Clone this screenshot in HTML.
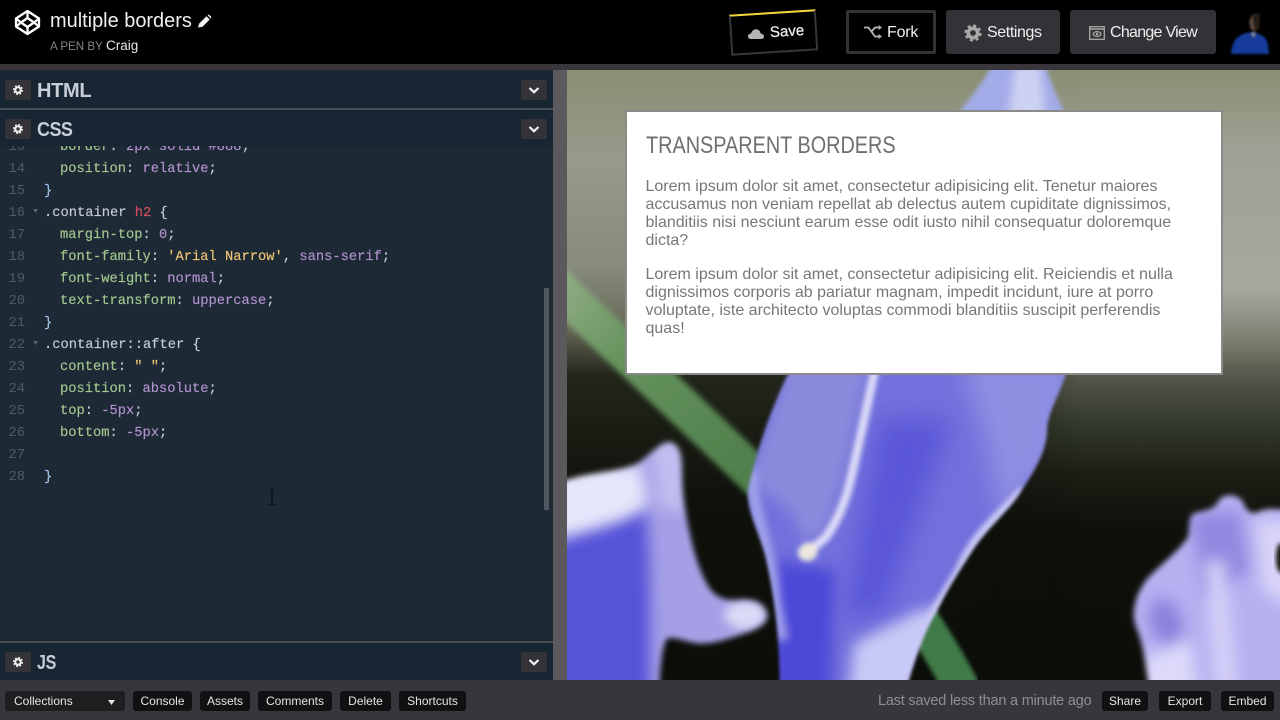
<!DOCTYPE html>
<html><head><meta charset="utf-8"><title>multiple borders</title>
<style>
*{box-sizing:border-box;margin:0;padding:0}
html,body{width:1280px;height:720px;overflow:hidden;background:#000;font-family:"Liberation Sans",sans-serif}
.a{position:absolute;white-space:nowrap}
.btn{position:absolute;background:#333236;border-radius:3px}
.hd{position:absolute;left:0;width:553px;background:#182634}
.sq{position:absolute;width:26px;height:20px;background:#343338;border-radius:2px}
.ttl{position:absolute;left:37px;font-weight:bold;font-size:20px;color:#c8ced6;line-height:20px;transform-origin:0 0}
.l{position:absolute;left:0;height:22px;line-height:22px;font-family:"Liberation Mono",monospace;font-size:13.75px;white-space:pre;color:#c5ccd2;-webkit-text-stroke:.15px}
.n{position:absolute;left:0;width:25px;text-align:right;color:#4e5a64;font-family:"Liberation Mono",monospace;font-size:13.75px;height:22px;line-height:22px}
.p{color:#a3c88f}.v{color:#b392cf}.r{color:#d24c5e}.s{color:#f0c674}.b{color:#a5c8f0}
.bb{position:absolute;top:691px;height:20px;background:#111013;border-radius:3px;color:#e4e4e4;font-size:12px;line-height:20px;text-align:center}
.card{position:absolute;left:625px;top:110px;width:598px;height:265px;background:#fff;border:2px solid #8a8a88}
.card p{position:absolute;left:18.5px;font-size:16px;line-height:18px;color:#777;white-space:nowrap}
</style></head><body>
<svg width="0" height="0" style="position:absolute"><defs>
<g id="gear"><circle cx="0" cy="0" r="2.7" fill="none" stroke="currentColor" stroke-width="2"/><circle cx="0" cy="0" r="4.300" fill="none" stroke="currentColor" stroke-width="1.400" stroke-dasharray="1.900 1.480"/></g>
<path id="chev" d="M-4.500-2L0 2.200 4.500-2" fill="none" stroke="#f2f2f2" stroke-width="2.200"/>
</defs></svg>

<!-- preview -->
<svg class="a" style="left:567px;top:70px" width="713" height="610" viewBox="567 70 713 610">
<defs>
<linearGradient id="bg" x1="0" y1="0" x2="0" y2="1">
<stop offset="0" stop-color="#8a8e72"/><stop offset=".13" stop-color="#9ea295"/><stop offset=".36" stop-color="#a5a99d"/><stop offset=".44" stop-color="#7d8172"/><stop offset=".5" stop-color="#55584a"/><stop offset=".58" stop-color="#343a2c"/><stop offset=".66" stop-color="#1d1f16"/><stop offset=".75" stop-color="#0e100a"/><stop offset="1" stop-color="#0b0d08"/>
</linearGradient>
<linearGradient id="bgl" x1="0" y1="0" x2="0" y2="1">
<stop offset="0" stop-color="#8a8e72"/><stop offset=".15" stop-color="#969b8c"/><stop offset=".32" stop-color="#878b7c"/><stop offset=".42" stop-color="#6a6b5a"/><stop offset=".5" stop-color="#22261a"/><stop offset=".7" stop-color="#0f110b"/><stop offset="1" stop-color="#0b0d08"/>
</linearGradient>
<linearGradient id="blend" x1="0" x2="1" y1="0" y2="0"><stop offset="0" stop-color="#fff"/><stop offset=".55" stop-color="#fff"/><stop offset=".72" stop-color="#000"/></linearGradient>
<linearGradient id="stemg" gradientUnits="userSpaceOnUse" x1="560" y1="290" x2="750" y2="470"><stop offset="0" stop-color="#8dab82"/><stop offset=".35" stop-color="#66935d"/><stop offset="1" stop-color="#4f7f4c"/></linearGradient>
<mask id="leftm"><rect x="567" y="70" width="713" height="610" fill="url(#blend)"/></mask>
<filter id="b1" x="-10%" y="-10%" width="120%" height="120%"><feGaussianBlur stdDeviation="1.500"/></filter>
<filter id="b2" x="-20%" y="-20%" width="140%" height="140%"><feGaussianBlur stdDeviation="2"/></filter>
<filter id="b3" x="-10%" y="-10%" width="120%" height="120%"><feGaussianBlur stdDeviation="3"/></filter>
<filter id="b4" x="-30%" y="-30%" width="160%" height="160%"><feGaussianBlur stdDeviation="4"/></filter>
<filter id="b7" x="-40%" y="-40%" width="180%" height="180%"><feGaussianBlur stdDeviation="7"/></filter>
<filter id="b12" x="-50%" y="-50%" width="200%" height="200%"><feGaussianBlur stdDeviation="12"/></filter>
<clipPath id="cp"><path d="M790 370C770 410 757 450 748 490C746 510 758 530 765 555C773 590 780 630 780 700H902L909 680C918 650 928 625 936 613C950 585 960 570 973 550C990 525 1010 510 1022 490C1035 470 1047 450 1047 430C1048 410 1060 395 1067 370Z"/></clipPath>
<clipPath id="cl"><path d="M540 490L567 480C590 472 620 472 638 463C650 455 660 442 670 442C680 445 682 455 682 470C682 490 684 505 688 525C692 545 697 565 705 580C712 595 720 600 735 600C750 598 762 600 767 612C770 625 755 630 740 635C725 640 710 645 695 643C680 640 670 635 666 640C662 650 660 665 659 700H540Z"/></clipPath>
<clipPath id="cr"><path d="M1134 610C1136 595 1140 590 1146 580C1160 565 1178 552 1188 537C1190 525 1188 515 1195 513C1205 510 1215 510 1219 500C1225 493 1238 494 1243 502C1246 510 1250 515 1258 512C1266 508 1275 508 1300 512V700H1151L1148 680C1145 660 1143 645 1138 632C1135 625 1133 618 1134 610Z"/></clipPath>
</defs>
<rect x="567" y="70" width="713" height="610" fill="url(#bg)"/>
<rect x="567" y="70" width="713" height="610" fill="url(#bgl)" mask="url(#leftm)"/>
<!-- stem -->
<path d="M550 280C600 330 690 412 765 485" fill="none" stroke="url(#stemg)" stroke-width="38" filter="url(#b3)"/>
<path d="M900 590C922 620 945 655 965 695" fill="none" stroke="#3f7a48" stroke-width="36" filter="url(#b2)"/>
<!-- top flower -->
<g filter="url(#b2)">
<path d="M992 65L1046 65C1050 85 1060 100 1066 118H955C968 100 982 85 992 65Z" fill="#a3aae8"/>
<path d="M1015 65L1040 65L1046 118H1008Z" fill="#dcdff6" filter="url(#b4)" opacity=".75"/>
</g>
<!-- left flower -->
<g filter="url(#b3)"><g clip-path="url(#cl)">
<rect x="530" y="430" width="250" height="280" fill="#a5a0e6"/>
<path d="M520 530C590 515 620 520 645 505C652 560 650 620 650 720H520Z" fill="#5552d8" filter="url(#b7)"/>
<path d="M520 465H640L648 505C620 525 590 530 520 550Z" fill="#e6e6fb" filter="url(#b7)"/>
<path d="M650 435L685 435L688 510L660 510Z" fill="#c8c6f3" filter="url(#b7)" opacity=".8"/>
<ellipse cx="745" cy="615" rx="20" ry="14" fill="#dcdbf6" filter="url(#b4)"/>
</g></g>
<!-- center petal -->
<g filter="url(#b1)"><g clip-path="url(#cp)">
<rect x="740" y="365" width="340" height="340" fill="#7270dc"/>
<path d="M960 360H1080L1055 460L1000 520L985 440Z" fill="#8f8fe2" filter="url(#b12)"/>
<path d="M880 420L950 420L885 610L845 620Z" fill="#5a57d8" filter="url(#b12)"/>
<path d="M775 560L835 570L830 710H770Z" fill="#4d4ad8" filter="url(#b7)"/>
<path d="M790 360H868L845 470L825 530L808 545L790 510L750 480Z" fill="#8b8bdc" filter="url(#b7)"/>
<path d="M876 365C866 410 858 450 848 490C842 510 835 525 825 538C817 545 808 552 800 555" fill="none" stroke="#e2e2fa" stroke-width="8" filter="url(#b2)"/>
<ellipse cx="808" cy="552" rx="9" ry="9" fill="#ece8de" filter="url(#b2)"/>
<path d="M752 470C750 510 770 540 775 600L783 640" fill="none" stroke="#a8aaec" stroke-width="10" filter="url(#b4)"/>
<path d="M1024 490C995 520 975 535 960 570C948 590 935 610 925 630" fill="none" stroke="#c8c8f5" stroke-width="10" filter="url(#b2)"/>
<path d="M854 645C870 632 895 625 915 612L945 605L915 710H846Z" fill="#c8c9f6" filter="url(#b7)"/>
</g></g>
<!-- right flower -->
<g filter="url(#b3)"><g clip-path="url(#cr)">
<rect x="1125" y="485" width="190" height="225" fill="#b6b0f1"/>
<path d="M1190 515L1240 510L1250 570L1205 600Z" fill="#9189e0" filter="url(#b7)"/>
<ellipse cx="1166" cy="622" rx="16" ry="24" fill="#8a82dc" filter="url(#b7)" transform="rotate(-20 1166 622)"/>
<path d="M1140 660L1190 640L1200 700H1140Z" fill="#dcd9f9" filter="url(#b7)"/>
<path d="M1205 560L1225 560L1240 700H1215Z" fill="#d3cff7" filter="url(#b7)"/>
<path d="M1255 520L1295 520L1295 610L1262 590Z" fill="#d8d4f8" filter="url(#b7)"/>
</g></g>
<ellipse cx="1281" cy="558" rx="5" ry="15" fill="#12120f" filter="url(#b2)"/>
</svg>

<!-- card -->
<div class="card">
<div class="a" style="left:19px;top:20px;font-size:24px;line-height:28px;color:#6f6f6f;transform:scaleX(.827);transform-origin:0 0">TRANSPARENT BORDERS</div>
<p style="top:66px">Lorem ipsum dolor sit amet, consectetur adipisicing elit. Tenetur maiores<br>accusamus non veniam repellat ab delectus autem cupiditate dignissimos,<br>blanditiis nisi nesciunt earum esse odit iusto nihil consequatur doloremque<br>dicta?</p>
<p style="top:154px">Lorem ipsum dolor sit amet, consectetur adipisicing elit. Reiciendis et nulla<br>dignissimos corporis ab pariatur magnam, impedit incidunt, iure at porro<br>voluptate, iste architecto voluptas commodi blanditiis suscipit perferendis<br>quas!</p>
</div>

<!-- top bar -->
<div class="a" style="left:0;top:0;width:1280px;height:64px;background:#000"></div>
<div class="a" style="left:0;top:64px;width:1280px;height:6px;background:#38363a"></div>
<svg class="a" style="left:14px;top:9px" width="27" height="27" viewBox="0 0 27 27" fill="none" stroke="#fff" stroke-width="2.300" stroke-linejoin="round">
<path d="M13.500 2L25 9.500V17.500L13.500 25L2 17.500V9.500Z"/><path d="M13.500 9L7 13.500L13.500 18L20 13.500Z"/><path d="M13.500 2V9M13.500 18V25M2 9.500L7 13.500L2 17.500M25 9.500L20 13.500L25 17.500"/></svg>
<div class="a" style="left:50px;top:9px;font-size:19.950px;line-height:24px;color:#f0f0ee">multiple borders</div>
<svg class="a" style="left:197px;top:14px" width="15" height="15" viewBox="0 0 15 15"><path d="M1 13.500L2.200 9.500L9.500 2.200L12.800 5.500L5.500 12.800Z" fill="#f4f4f4"/><path d="M10.500 1.200L12 .6L14.400 3L13.800 4.500Z" fill="#f4f4f4"/></svg>
<div class="a" style="left:50px;top:39px;font-size:11.600px;line-height:15px;color:#85858a">A PEN BY</div>
<div class="a" style="left:106px;top:38px;font-size:13.500px;line-height:16px;color:#e6e6e6">Craig</div>

<!-- save -->
<div class="a" style="left:730px;top:12px;width:87px;height:41px;border:2px solid #36353a;border-top:2px solid #f2d93a;background:#000;transform:rotate(-3.600deg)"></div>
<svg class="a" style="left:747px;top:27px" width="18" height="13" viewBox="0 0 18 13"><path d="M4 12C1.500 12 .5 10 1 8.500C1.500 7 3 6.500 4 6.500C5 3 8 1.500 10.500 2.500C12.500 3.200 13.500 5 13.500 6.500C15.500 6.500 17 8 17 9.500C17 11 16 12 14 12Z" fill="#b4b4b4"/></svg>
<div class="a" style="left:770px;top:22px;font-size:15px;line-height:20px;color:#f0f0f0;transform:rotate(-3.600deg);-webkit-text-stroke:.25px #f0f0f0">Save</div>

<!-- fork -->
<div class="a" style="left:846px;top:10px;width:90px;height:44px;border:3px solid #333236;border-radius:2px"></div>
<svg class="a" style="left:864px;top:25px" width="18" height="15" viewBox="0 0 18 15" fill="none" stroke="#b5b5b5" stroke-width="1.800"><path d="M0 2.500H4.500L11 11.500H15M8 6L11 2.500H15"/><path d="M14.500 0L18 2.500L14.500 5ZM14.500 9L18 11.500L14.500 14Z" fill="#b5b5b5" stroke="none"/></svg>
<div class="a" style="left:887px;top:23px;font-size:16px;line-height:20px;color:#eee;letter-spacing:-.2px">Fork</div>

<!-- settings -->
<div class="btn" style="left:946px;top:10px;width:114px;height:44px"></div>
<svg class="a" style="left:964px;top:24px;color:#a8a8a8" width="18" height="18" viewBox="-9 -9 18 18"><circle r="4.700" fill="none" stroke="currentColor" stroke-width="3.600"/><circle r="7.300" fill="none" stroke="currentColor" stroke-width="2.600" stroke-dasharray="3 2.730"/></svg>
<div class="a" style="left:987px;top:23px;font-size:16px;line-height:20px;color:#eee;letter-spacing:-.4px">Settings</div>

<!-- change view -->
<div class="btn" style="left:1070px;top:10px;width:146px;height:44px"></div>
<svg class="a" style="left:1089px;top:26px" width="16" height="14" viewBox="0 0 16 14" fill="none" stroke="#a8a8a8" stroke-width="1.300"><rect x=".7" y=".7" width="14.600" height="12.600"/><path d="M.7 3H15.300" stroke-width="1.500"/><ellipse cx="8" cy="8" rx="3.800" ry="2.400"/><circle cx="8" cy="8" r="1.200" fill="#a8a8a8" stroke="none"/></svg>
<div class="a" style="left:1110px;top:23px;font-size:16px;line-height:20px;color:#eee;letter-spacing:-.72px">Change View</div>

<!-- avatar -->
<svg class="a" style="left:1225px;top:5px" width="55" height="55" viewBox="1225 5 55 55">
<defs><filter id="av" x="-30%" y="-30%" width="160%" height="160%"><feGaussianBlur stdDeviation="1.100"/></filter></defs>
<path d="M1231 54C1232 42 1236 36 1246 33L1252 32C1262 34 1267 38 1268 45L1269 54Z" fill="#173a9a" filter="url(#av)"/>
<ellipse cx="1254" cy="23" rx="4.500" ry="8" fill="#5e4c40" filter="url(#av)"/>
<path d="M1252 14L1260 13L1259 30L1255 30Z" fill="#221c18" filter="url(#av)"/>
<path d="M1250 33L1256 32L1254 38Z" fill="#8a8a90" filter="url(#av)"/>
</svg>

<!-- editors -->
<div class="a" style="left:0;top:70px;width:553px;height:610px;background:#1d2a36"></div>
<div class="a" style="left:553px;top:70px;width:14px;height:610px;background:#5b595c"></div>
<div class="hd" style="top:71px;height:37px"></div>
<div class="a" style="left:0;top:108px;width:553px;height:2px;background:#4a4d52"></div>
<div class="hd" style="top:110px;height:36px"></div>
<div class="a" style="left:0;top:641px;width:553px;height:2px;background:#4a4d52"></div>
<div class="hd" style="top:643px;height:37px"></div>

<div style="position:absolute;left:0;top:146px;width:553px;height:495px;overflow:hidden">
<div class="a" style="left:0;top:-9px;width:540px;height:520px">
<div class="n" style="top:0">13</div><div class="l" style="top:0;left:60px"><span class="p">border</span>: <span class="v">2px solid #888</span>;</div>
<div class="n" style="top:22px">14</div><div class="l" style="top:22px;left:60px"><span class="p">position</span>: <span class="v">relative</span>;</div>
<div class="n" style="top:44px">15</div><div class="l" style="top:44px;left:44px"><span class="b">}</span></div>
<div class="n" style="top:66px">16</div><div class="l" style="top:66px;left:44px">.container <span class="r">h2</span> {</div>
<div class="n" style="top:88px">17</div><div class="l" style="top:88px;left:60px"><span class="p">margin-top</span>: <span class="v">0</span>;</div>
<div class="n" style="top:110px">18</div><div class="l" style="top:110px;left:60px"><span class="p">font-family</span>: <span class="s">'Arial Narrow'</span>, <span class="v">sans-serif</span>;</div>
<div class="n" style="top:132px">19</div><div class="l" style="top:132px;left:60px"><span class="p">font-weight</span>: <span class="v">normal</span>;</div>
<div class="n" style="top:154px">20</div><div class="l" style="top:154px;left:60px"><span class="p">text-transform</span>: <span class="v">uppercase</span>;</div>
<div class="n" style="top:176px">21</div><div class="l" style="top:176px;left:44px"><span class="b">}</span></div>
<div class="n" style="top:198px">22</div><div class="l" style="top:198px;left:44px">.container::after {</div>
<div class="n" style="top:220px">23</div><div class="l" style="top:220px;left:60px"><span class="p">content</span>: <span class="s">" "</span>;</div>
<div class="n" style="top:242px">24</div><div class="l" style="top:242px;left:60px"><span class="p">position</span>: <span class="v">absolute</span>;</div>
<div class="n" style="top:264px">25</div><div class="l" style="top:264px;left:60px"><span class="p">top</span>: <span class="v">-5px</span>;</div>
<div class="n" style="top:286px">26</div><div class="l" style="top:286px;left:60px"><span class="p">bottom</span>: <span class="v">-5px</span>;</div>
<div class="n" style="top:308px">27</div>
<div class="n" style="top:330px">28</div><div class="l" style="top:330px;left:44px"><span class="b">}</span></div>
</div>
</div>
<svg class="a" style="left:32px;top:208px" width="7" height="140" viewBox="0 0 7 140" fill="#5a6670"><path d="M1 1H6L3.500 5Z"/><path d="M1 133H6L3.500 137Z"/></svg>
<div class="a" style="left:544px;top:288px;width:5px;height:222px;background:#4f575f"></div>
<svg class="a" style="left:267px;top:489px" width="10" height="16" viewBox="0 0 10 16" fill="none" stroke="#0c0c0c" stroke-width="1.100"><path d="M2.500 .7H7.500M5 .7V15.300M2.500 15.300H7.500"/></svg>

<!-- headers -->
<div class="sq" style="left:5px;top:80px"></div><svg class="a" style="left:5px;top:80px;color:#f4f4f4" width="26" height="20" viewBox="-13 -10 26 20"><use href="#gear"/></svg>
<div class="ttl" style="top:81px;letter-spacing:-.3px">HTML</div>
<div class="sq" style="left:521px;top:80px"></div><svg class="a" style="left:521px;top:80px" width="26" height="20" viewBox="-13 -10 26 20"><use href="#chev"/></svg>
<div class="sq" style="left:5px;top:119px"></div><svg class="a" style="left:5px;top:119px;color:#f4f4f4" width="26" height="20" viewBox="-13 -10 26 20"><use href="#gear"/></svg>
<div class="ttl" style="top:120px;letter-spacing:-.6px;transform:scaleX(.9)">CSS</div>
<div class="sq" style="left:521px;top:119px"></div><svg class="a" style="left:521px;top:119px" width="26" height="20" viewBox="-13 -10 26 20"><use href="#chev"/></svg>
<div class="sq" style="left:5px;top:652px"></div><svg class="a" style="left:5px;top:652px;color:#f4f4f4" width="26" height="20" viewBox="-13 -10 26 20"><use href="#gear"/></svg>
<div class="ttl" style="top:653px;letter-spacing:-.4px;transform:scaleX(.8)">JS</div>
<div class="sq" style="left:521px;top:652px"></div><svg class="a" style="left:521px;top:652px" width="26" height="20" viewBox="-13 -10 26 20"><use href="#chev"/></svg>

<!-- bottom bar -->
<div class="a" style="left:0;top:680px;width:1280px;height:40px;background:#38363a"></div>
<div class="bb" style="left:5px;width:120px;background:#1e1d20;text-align:left;padding-left:9px">Collections</div>
<svg class="a" style="left:107px;top:699px" width="9" height="7" viewBox="0 0 9 7"><path d="M1 1H8L4.500 6Z" fill="#e4e4e4"/></svg>
<div class="bb" style="left:133px;width:59px">Console</div>
<div class="bb" style="left:200px;width:50px">Assets</div>
<div class="bb" style="left:258px;width:74px">Comments</div>
<div class="bb" style="left:340px;width:51px">Delete</div>
<div class="bb" style="left:399px;width:67px">Shortcuts</div>
<div class="a" style="left:878px;top:691px;font-size:14.500px;line-height:20px;color:#8f8e92;letter-spacing:-.2px">Last saved less than a minute ago</div>
<div class="bb" style="left:1102px;width:46px">Share</div>
<div class="bb" style="left:1159px;width:52px">Export</div>
<div class="bb" style="left:1221px;width:53px">Embed</div>
</body></html>
